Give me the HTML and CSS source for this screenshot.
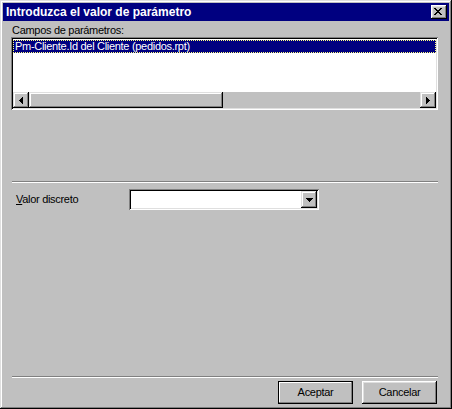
FILE: index.html
```html
<!DOCTYPE html>
<html>
<head>
<meta charset="utf-8">
<link rel="stylesheet" href="styles.css">
</head>
<body>
<div class="window">
  <div class="titlebar">
    <span class="title">Introduzca el valor de parámetro</span>
    <div class="close">
      <svg width="8" height="7" viewBox="0 0 8 7" shape-rendering="crispEdges">
        <rect x="0" y="0" width="2" height="1"/><rect x="6" y="0" width="2" height="1"/>
        <rect x="1" y="1" width="2" height="1"/><rect x="5" y="1" width="2" height="1"/>
        <rect x="2" y="2" width="4" height="1"/>
        <rect x="3" y="3" width="2" height="1"/>
        <rect x="2" y="4" width="4" height="1"/>
        <rect x="1" y="5" width="2" height="1"/><rect x="5" y="5" width="2" height="1"/>
        <rect x="0" y="6" width="2" height="1"/><rect x="6" y="6" width="2" height="1"/>
      </svg>
    </div>
  </div>
  <div class="content">
    <div class="label">Campos de parámetros:</div>
    <div class="listbox">
      <div class="items">
        <div class="item selected">Pm-Cliente.Id del Cliente (pedidos.rpt)</div>
      </div>
      <div class="hscroll">
        <div class="sbtn">
          <svg width="4" height="7" viewBox="0 0 4 7" shape-rendering="crispEdges">
            <rect x="3" y="0" width="1" height="7"/><rect x="2" y="1" width="1" height="5"/><rect x="1" y="2" width="1" height="3"/><rect x="0" y="3" width="1" height="1"/>
          </svg>
        </div>
        <div class="track">
          <div class="thumb"></div>
        </div>
        <div class="sbtn">
          <svg width="4" height="7" viewBox="0 0 4 7" shape-rendering="crispEdges">
            <rect x="0" y="0" width="1" height="7"/><rect x="1" y="1" width="1" height="5"/><rect x="2" y="2" width="1" height="3"/><rect x="3" y="3" width="1" height="1"/>
          </svg>
        </div>
      </div>
    </div>
    <div class="sep sep-top"></div>
    <div class="row">
      <div class="row-label"><u>V</u>alor discreto</div>
      <div class="combo">
        <div class="combo-field"></div>
        <div class="combo-btn">
          <svg width="7" height="4" viewBox="0 0 7 4" shape-rendering="crispEdges">
            <rect x="0" y="0" width="7" height="1"/><rect x="1" y="1" width="5" height="1"/><rect x="2" y="2" width="3" height="1"/><rect x="3" y="3" width="1" height="1"/>
          </svg>
        </div>
      </div>
    </div>
    <div class="bottom">
      <div class="sep"></div>
      <div class="buttons">
        <div class="btn default"><span>Aceptar</span></div>
        <div class="btn"><span>Cancelar</span></div>
      </div>
    </div>
  </div>
</div>
</body>
</html>
```

FILE: styles.css
```css
* { box-sizing: border-box; }
html, body {
  margin: 0;
  padding: 0;
  background: #c0c0c0;
}
body {
  width: 452px;
  height: 409px;
  font-family: "Liberation Sans", Arial, sans-serif;
  font-size: 11px;
  letter-spacing: -0.3px;
  color: #000;
}
.window {
  width: 452px;
  height: 409px;
  padding: 3px;
  background: #c0c0c0;
  box-shadow: inset -1px -1px #000, inset 1px 1px #dfdfdf, inset -2px -2px #808080, inset 2px 2px #fff;
  display: flex;
  flex-direction: column;
}
.titlebar {
  height: 18px;
  background: #000080;
  display: flex;
  align-items: center;
  justify-content: space-between;
  padding: 0 2px 0 3px;
}
.title {
  color: #fff;
  font-weight: bold;
  font-size: 12px;
  letter-spacing: 0;
  line-height: 14px;
}
.close {
  width: 16px;
  height: 14px;
  background: #c0c0c0;
  box-shadow: inset -1px -1px #000, inset 1px 1px #fff, inset -2px -2px #808080, inset 2px 2px #dfdfdf;
  padding: 3px 0 0 3px;
  display: flex;
  align-items: flex-start;
}
.close svg { display: block; fill: #000; }
.content {
  flex: 1;
  display: flex;
  flex-direction: column;
  padding: 3px 11px 2px 8px;
}
.label {
  height: 13px;
  line-height: 13px;
  margin-left: 1px;
}
.listbox {
  height: 73px;
  padding: 2px;
  background: #fff;
  box-shadow: inset 1px 1px #808080, inset -1px -1px #fff, inset 2px 2px #000, inset -2px -2px #dfdfdf;
  display: flex;
  flex-direction: column;
}
.items {
  flex: 1;
  padding-top: 1px;
}
.item {
  height: 13px;
  line-height: 13px;
  padding-left: 2px;
  white-space: nowrap;
}
.item.selected {
  background: #000080;
  color: #fff;
  outline: 1px dotted #ffff80;
  outline-offset: -1px;
}
.hscroll {
  height: 16px;
  display: flex;
  background: #c0c0c0;
}
.sbtn {
  width: 16px;
  height: 16px;
  background: #c0c0c0;
  box-shadow: inset -1px -1px #000, inset 1px 1px #dfdfdf, inset -2px -2px #808080, inset 2px 2px #fff;
  display: flex;
  align-items: center;
  justify-content: center;
}
.sbtn svg { display: block; fill: #000; }
.track {
  flex: 1;
  display: flex;
  background: #c0c0c0;
}
.thumb {
  width: 194px;
  height: 16px;
  background: #c0c0c0;
  box-shadow: inset -1px -1px #000, inset 1px 1px #dfdfdf, inset -2px -2px #808080, inset 2px 2px #fff;
}
.sep {
  height: 2px;
  margin-left: 1px;
  border-top: 1px solid #808080;
  border-bottom: 1px solid #fff;
}
.sep-top {
  margin-top: 71px;
}
.row {
  margin-top: 6px;
  height: 21px;
  display: flex;
  align-items: center;
}
.row-label {
  width: 118px;
  padding-left: 5px;
  line-height: 13px;
}
.combo {
  width: 190px;
  height: 21px;
  padding: 2px;
  background: #fff;
  box-shadow: inset 1px 1px #808080, inset -1px -1px #fff, inset 2px 2px #000, inset -2px -2px #dfdfdf;
  display: flex;
}
.combo-field { flex: 1; }
.combo-btn {
  width: 16px;
  height: 17px;
  background: #c0c0c0;
  box-shadow: inset -1px -1px #000, inset 1px 1px #dfdfdf, inset -2px -2px #808080, inset 2px 2px #fff;
  display: flex;
  align-items: center;
  justify-content: center;
}
.combo-btn svg { display: block; fill: #000; }
.bottom {
  margin-top: auto;
  display: flex;
  flex-direction: column;
}
.buttons {
  margin-top: 3px;
  display: flex;
  justify-content: flex-end;
  gap: 9px;
  padding-right: 1px;
}
.btn {
  width: 75px;
  height: 23px;
  background: #c0c0c0;
  box-shadow: inset -1px -1px #000, inset 1px 1px #fff, inset -2px -2px #808080, inset 2px 2px #dfdfdf;
  display: flex;
  align-items: center;
  justify-content: center;
  line-height: 13px;
}
.btn.default {
  box-shadow: inset 0 0 0 1px #000, inset -2px -2px #808080, inset 2px 2px #fff;
}
```
